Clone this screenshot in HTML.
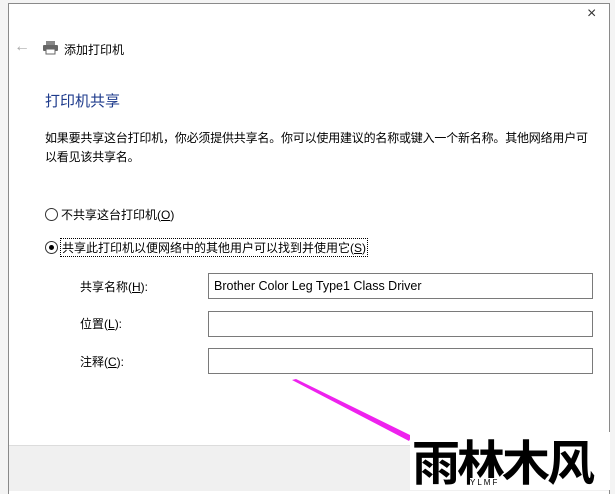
<!DOCTYPE html><html><head><meta charset="utf-8"><style>
body{margin:0;width:615px;height:490px;overflow:hidden;background:#f4f4f4;font-family:"Liberation Sans","Noto Sans CJK SC",sans-serif;position:relative}
.dlg{position:absolute;left:8px;top:3px;width:600px;height:490px;background:#fff;border:1px solid #8a8a8a;border-bottom:none}
.a{position:absolute;white-space:nowrap}
.foot{position:absolute;left:9px;top:445px;width:600px;height:45px;background:#f0f0f0;border-top:1px solid #dcdcdc}
.in{position:absolute;left:208px;width:378px;height:24px;border:1px solid #7a7a7a;background:#fff;font-size:12.5px;line-height:24px;padding-left:5px;box-sizing:content-box}
.lbl{font-size:12px;color:#000}
.r{position:absolute;width:11px;height:11px;border:1px solid #333;border-radius:50%;background:#fff}
</style></head><body>
<div class="dlg"></div>
<div class="a" style="left:587px;top:5px;font-size:16px;color:#333">×</div>
<div class="a" style="left:14px;top:38px;font-size:16px;color:#aaa">←</div>
<svg class="a" style="left:42px;top:40px" width="17" height="15" viewBox="0 0 17 15"><rect x="4" y="1" width="9" height="4" fill="#888"/><rect x="1" y="5" width="15" height="6" rx="1" fill="#666"/><rect x="4" y="9" width="9" height="5" fill="#fff" stroke="#666"/></svg>
<div class="a lbl" style="left:64px;top:41px">添加打印机</div>
<div class="a" style="left:45px;top:90px;font-size:15px;color:#1e3b8c">打印机共享</div>
<div class="a lbl" style="left:45px;top:129px;line-height:19px;letter-spacing:-0.2px">如果要共享这台打印机，你必须提供共享名。你可以使用建议的名称或键入一个新名称。其他网络用户可<br>以看见该共享名。</div>
<div class="r" style="left:45px;top:208px"></div>
<div class="a lbl" style="left:61px;top:206px">不共享这台打印机(<u>O</u>)</div>
<div class="r" style="left:45px;top:241px"></div><div class="a" style="left:49px;top:245px;width:5px;height:5px;border-radius:50%;background:#000"></div>
<div class="a lbl" style="left:60px;top:238px;border:1px dotted #000;padding:0 1px">共享此打印机以便网络中的其他用户可以找到并使用它(<u>S</u>)</div>
<div class="a lbl" style="left:80px;top:278px">共享名称(<u>H</u>):</div>
<div class="a lbl" style="left:80px;top:315px">位置(<u>L</u>):</div>
<div class="a lbl" style="left:80px;top:353px">注释(<u>C</u>):</div>
<div class="in" style="top:273px">Brother Color Leg Type1 Class Driver</div>
<div class="in" style="top:311px"></div>
<div class="in" style="top:348px"></div>
<div class="foot"></div>
<svg class="a" style="left:0;top:0" width="615" height="490"><polygon points="292,380 296,379 412,436 409,441" fill="#ee22ee"/></svg>
<div class="a" style="left:410px;top:432px;width:200px;height:58px;background:#fff"></div>
<div class="a" style="left:412px;top:430px;font-size:48px;font-weight:bold;color:#000;letter-spacing:-3px;line-height:58px;font-family:'Noto Sans CJK SC',sans-serif">雨林木风</div>
<div class="a" style="left:470px;top:478px;font-size:8px;color:#000;letter-spacing:2px;background:#fff">YLMF</div>
</body></html>
